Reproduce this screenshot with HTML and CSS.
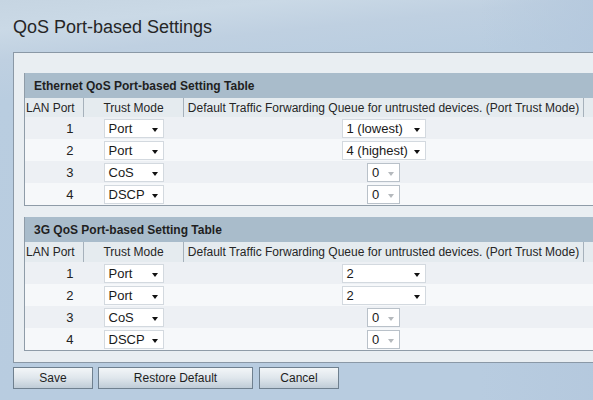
FILE: index.html
```html
<!DOCTYPE html>
<html>
<head>
<meta charset="utf-8">
<link rel="stylesheet" href="styles.css">
</head>
<body>
<div class="page">
  <h1 class="title">QoS Port-based Settings</h1>
  <div class="panel">
    <table class="qos">
      <colgroup><col class="c1"><col class="c2"><col class="c3"><col class="c4"></colgroup>
      <tr><th class="tblhead" colspan="4">Ethernet QoS Port-based Setting Table</th></tr>
      <tr class="colhead">
        <td class="h1">LAN Port</td><td>Trust Mode</td><td>Default Traffic Forwarding Queue for untrusted devices. (Port Trust Mode)</td><td></td>
      </tr>
      <tr class="odd"><td class="num">1</td><td class="ctr"><span class="sel trust"><span>Port</span><i class="arr"></i></span></td><td class="ctr"><span class="sel queue"><span>1 (lowest)</span><i class="arr"></i></span></td><td></td></tr>
      <tr class="even"><td class="num">2</td><td class="ctr"><span class="sel trust"><span>Port</span><i class="arr"></i></span></td><td class="ctr"><span class="sel queue"><span>4 (highest)</span><i class="arr"></i></span></td><td></td></tr>
      <tr class="odd"><td class="num">3</td><td class="ctr"><span class="sel trust"><span>CoS</span><i class="arr"></i></span></td><td class="ctr"><span class="sel small dis"><span>0</span><i class="arr"></i></span></td><td></td></tr>
      <tr class="even"><td class="num">4</td><td class="ctr"><span class="sel trust"><span>DSCP</span><i class="arr"></i></span></td><td class="ctr"><span class="sel small dis"><span>0</span><i class="arr"></i></span></td><td></td></tr>
    </table>
    <table class="qos second">
      <colgroup><col class="c1"><col class="c2"><col class="c3"><col class="c4"></colgroup>
      <tr><th class="tblhead" colspan="4">3G QoS Port-based Setting Table</th></tr>
      <tr class="colhead tall">
        <td class="h1">LAN Port</td><td>Trust Mode</td><td>Default Traffic Forwarding Queue for untrusted devices. (Port Trust Mode)</td><td></td>
      </tr>
      <tr class="odd"><td class="num">1</td><td class="ctr"><span class="sel trust"><span>Port</span><i class="arr"></i></span></td><td class="ctr"><span class="sel queue"><span>2</span><i class="arr"></i></span></td><td></td></tr>
      <tr class="even"><td class="num">2</td><td class="ctr"><span class="sel trust"><span>Port</span><i class="arr"></i></span></td><td class="ctr"><span class="sel queue"><span>2</span><i class="arr"></i></span></td><td></td></tr>
      <tr class="odd"><td class="num">3</td><td class="ctr"><span class="sel trust"><span>CoS</span><i class="arr"></i></span></td><td class="ctr"><span class="sel small dis"><span>0</span><i class="arr"></i></span></td><td></td></tr>
      <tr class="even"><td class="num">4</td><td class="ctr"><span class="sel trust"><span>DSCP</span><i class="arr"></i></span></td><td class="ctr"><span class="sel small dis"><span>0</span><i class="arr"></i></span></td><td></td></tr>
    </table>
  </div>
  <div class="buttons">
    <button class="btn save">Save</button>
    <button class="btn restore">Restore Default</button>
    <button class="btn cancel">Cancel</button>
  </div>
</div>
</body>
</html>
```
FILE: styles.css
```css
html, body {
  margin: 0;
  padding: 0;
  width: 593px;
  height: 400px;
  overflow: hidden;
}
body {
  font-family: "Liberation Sans", Arial, sans-serif;
  color: #222;
  background:
    linear-gradient(90deg, rgba(184,204,224,0) 0px, rgba(184,204,224,0) 480px, rgba(180,200,221,0.8) 593px),
    linear-gradient(174deg, #c6d5e2 0px, #cad9e6 30px, #bfd0e1 60px, #b9cde0 100px, #b8cce0 400px);
}
.page {
  padding: 0 0 0 13px;
}
.title {
  margin: 0;
  padding-top: 17px;
  font-size: 18px;
  font-weight: normal;
  line-height: 20px;
  color: #262626;
}
.panel {
  margin-top: 15px;
  width: 640px;
  border: 1px solid #8a98a6;
  background: #e9eef2;
  padding: 20px 0 11px 10px;
}
.qos {
  border-collapse: collapse;
  width: 640px;
  font-size: 12px;
  table-layout: fixed;
  border-left: 1px solid #8f9ca8;
  border-bottom: 1px solid #8f9ca8;
}
.qos.second {
  margin-top: 11px;
}
.qos td, .qos th {
  padding: 0;
}
.c1 { width: 59px; }
.c2 { width: 100px; }
.c3 { width: 400px; }
.c4 { width: 81px; }
.tblhead {
  height: 25px;
  background: #a9bccb;
  text-align: left;
  font-weight: bold;
  font-size: 12px;
  padding-left: 9px !important;
  color: #1f1f1f;
}
.colhead td {
  height: 19px;
  background: #e5ebef;
  border-right: 1px solid #a6b1bb;
  text-align: center;
  white-space: nowrap;
  color: #262626;
}
.colhead.tall td { height: 20px; }
.colhead .h1 { text-align: left; padding-left: 1px; }
.odd td { background: #edf0f4; height: 22px; }
.even td { background: #f6f8fa; height: 22px; }
.num {
  text-align: right;
  padding-right: 10px !important;
  font-size: 13px;
}
.ctr { text-align: center; }
.sel {
  display: inline-flex;
  align-items: center;
  justify-content: space-between;
  box-sizing: border-box;
  height: 19px;
  background: #fff;
  border: 1px solid #d3d9df;
  vertical-align: middle;
  font-size: 13px;
  color: #1a1a1a;
  padding: 0 5px 0 4px;
  text-align: left;
}
.sel.trust { width: 60px; }
.sel.queue { width: 84px; }
.sel.small { width: 33px; border-color: #b9c1c9; }
.arr {
  width: 0;
  height: 0;
  border-left: 3px solid transparent;
  border-right: 3px solid transparent;
  border-top: 4px solid #111;
  margin-top: 3px;
}
.dis .arr { border-top-color: #b5b9bd; }
.buttons {
  display: flex;
  gap: 5px;
  margin-top: 4px;
}
.btn {
  height: 22px;
  box-sizing: border-box;
  border: 1px solid #6f808f;
  background: linear-gradient(#f3f6f8, #dfe6ec 50%, #bfccd7);
  font-family: "Liberation Sans", Arial, sans-serif;
  font-size: 12px;
  color: #1e1e1e;
  padding: 0;
}
.save { width: 80px; }
.restore { width: 155px; }
.cancel { width: 80px; margin-left: 1px; }
```
